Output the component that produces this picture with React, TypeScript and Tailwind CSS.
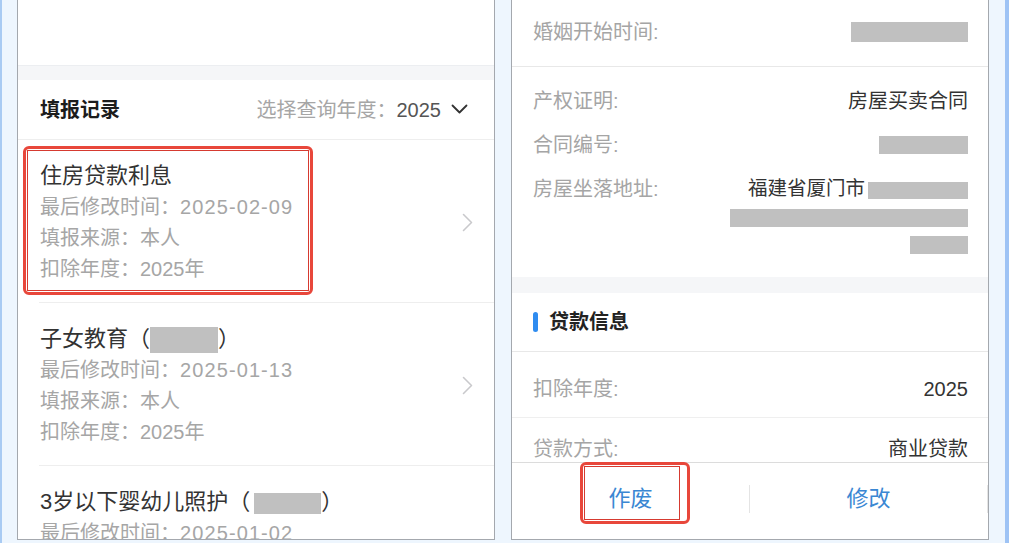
import React from "react";

const font = "font-['Liberation_Sans','Noto_Sans_CJK_SC',sans-serif]";

function Block({ w, h }: { w: string; h: string }) {
  return <span className={`inline-block bg-[#c0c0c0] align-middle ${w} ${h}`} />;
}

function ChevronRight() {
  return (
    <svg width="11" height="19" viewBox="0 0 11 19" fill="none">
      <path d="M1.5 1.5l8 8-8 8" stroke="#c9c9cc" strokeWidth="1.6" strokeLinecap="round" strokeLinejoin="round" />
    </svg>
  );
}

function Record({ title, date, highlight }: any) {
  return (
    <div className="relative flex items-center justify-between pl-[22px] pr-[21px] pt-5 pb-[17px]">
      <div>
        <div className="text-[22px] leading-[32px] text-[#333]">{title}</div>
        <div className="text-[20px] leading-[31px] text-[#a6a6a6]">
          最后修改时间：<span className="tracking-[1.1px]">{date}</span>
        </div>
        <div className="text-[20px] leading-[31px] text-[#a6a6a6]">填报来源：本人</div>
        <div className="text-[20px] leading-[31px] text-[#a6a6a6]">扣除年度：2025年</div>
      </div>
      <ChevronRight />
      {highlight && (
        <div className="absolute left-[5px] top-[6px] h-[149px] w-[290px] rounded-[6px] border-[3px] border-[#e8473b]">
          <div className="absolute inset-[1px] border border-[#d63a30]" />
        </div>
      )}
    </div>
  );
}

function Divider() {
  return <div className="ml-[21px] h-px shrink-0 bg-[#eeeeee]" />;
}

function Row({ label, children, cls }: any) {
  return (
    <div className={`flex justify-between text-[20px] ${cls || ""}`}>
      <span className="leading-[30px] text-[#a5a5a5]">{label}</span>
      <div className="flex flex-col items-end text-[#333]">{children}</div>
    </div>
  );
}

export default function App() {
  return (
    <div className={`flex h-[543px] w-[1009px] overflow-hidden bg-[#eef6fe] ${font}`}>
      <div className="w-[2px] shrink-0 bg-[#a9cbf3]" />
      <div className="w-[15px] shrink-0" />

      {/* 左侧：填报记录 */}
      <div className="flex h-[540px] w-[478px] shrink-0 flex-col overflow-hidden border-x border-b border-[#a4a8ae] bg-white">
        <div className="h-[66px] shrink-0 border-b border-[#eceef1]" />
        <div className="h-[14px] shrink-0 bg-[#f5f6f8]" />
        <div className="flex h-[60px] shrink-0 items-center justify-between border-b border-[#eeeeee] pl-[22px] pr-[26px]">
          <span className="text-[20px] font-bold text-[#1c1c1c]">填报记录</span>
          <div className="flex items-center gap-[10px] text-[20px]">
            <span>
              <span className="text-[#a6a6a6]">选择查询年度：</span>
              <span className="text-[#555]">2025</span>
            </span>
            <svg width="17" height="11" viewBox="0 0 17 11" fill="none">
              <path d="M1.5 1.5l7 7 7-7" stroke="#333" strokeWidth="1.8" strokeLinecap="round" strokeLinejoin="round" />
            </svg>
          </div>
        </div>
        <Record title="住房贷款利息" date="2025-02-09" highlight />
        <Divider />
        <Record
          title={
            <>
              子女教育（<Block w="w-[68px]" h="h-[26px]" />）
            </>
          }
          date="2025-01-13"
        />
        <Divider />
        <Record
          title={
            <>
              3岁以下婴幼儿照护（<span className="ml-[4px]"><Block w="w-[67px]" h="h-[21px]" /></span>）
            </>
          }
          date="2025-01-02"
        />
      </div>

      <div className="w-[16px] shrink-0" />

      {/* 右侧：详情 */}
      <div className="flex h-[540px] w-[478px] shrink-0 flex-col overflow-hidden border-x border-b border-[#a4a8ae] bg-white">
        <div className="flex-1 overflow-hidden">
          <div className="border-b border-[#e8e8e8] pl-[21px] pr-5 pt-[17px] pb-[19px]">
            <Row label="婚姻开始时间:">
              <div className="flex h-[30px] items-center">
                <Block w="w-[117px]" h="h-[20px]" />
              </div>
            </Row>
          </div>
          <div className="flex flex-col gap-[14px] pl-[21px] pr-5 pt-[19px] pb-[19px]">
            <Row label="产权证明:">
              <span className="leading-[30px]">房屋买卖合同</span>
            </Row>
            <Row label="合同编号:">
              <div className="flex h-[30px] items-center">
                <Block w="w-[89px]" h="h-[18px]" />
              </div>
            </Row>
            <Row label="房屋坐落地址:">
              <div className="flex h-[30px] items-center">
                <span className="text-[19.5px]">福建省厦门市</span>
                <span className="ml-[3px]">
                  <Block w="w-[100px]" h="h-[17px]" />
                </span>
              </div>
              <div className="flex h-[27px] items-center">
                <Block w="w-[238px]" h="h-[18px]" />
              </div>
              <div className="flex h-[27px] items-center">
                <Block w="w-[58px]" h="h-[18px]" />
              </div>
            </Row>
          </div>
          <div className="h-4 bg-[#f5f6f8]" />
          <div className="flex h-[59px] items-center gap-[11px] border-b border-[#e8e8e8] pl-[21px]">
            <span className="h-[20px] w-[5px] rounded-full bg-[#2f8cf0]" />
            <span className="text-[20px] font-bold text-[#222]">贷款信息</span>
          </div>
          <div className="border-b border-[#efefef] pl-[21px] pr-5 pt-[22px] pb-[13px]">
            <Row label="扣除年度:">
              <span className="leading-[30px]">2025</span>
            </Row>
          </div>
          <div className="pl-[21px] pr-5 pt-[16px]">
            <Row label="贷款方式:">
              <span className="leading-[30px]">商业贷款</span>
            </Row>
          </div>
        </div>

        <div className="relative flex h-[77px] shrink-0 border-t border-[#dcdcdc] text-[22px] text-[#3a87d3]">
          <div className="flex flex-1 justify-center pt-[21px] leading-[30px]">作废</div>
          <div className="mt-[22px] h-[28px] w-px bg-[#e4e4e4]" />
          <div className="flex flex-1 justify-center pt-[21px] leading-[30px]">修改</div>
          <div className="mt-[22px] h-[28px] w-px bg-[#e4e4e4]" />
          <div className="absolute left-[68px] top-[-1px] h-[62px] w-[110px] rounded-[6px] border-[3px] border-[#e8473b]">
            <div className="absolute inset-[1px] right-[7px] border border-[#d63a30]" />
          </div>
        </div>
      </div>

      <div className="w-[16px] shrink-0" />
      <div className="w-[4px] shrink-0 bg-[#9ec3f5]" />
    </div>
  );
}
